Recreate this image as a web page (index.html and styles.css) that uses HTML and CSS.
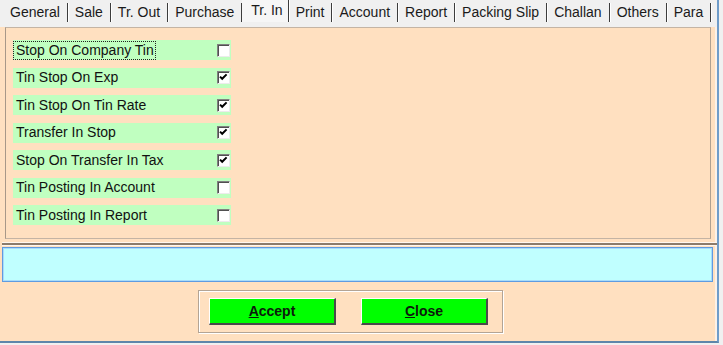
FILE: index.html
```html
<!DOCTYPE html>
<html>
<head>
<meta charset="utf-8">
<title>Settings</title>
<link rel="stylesheet" href="styles.css">
</head>
<body>
<div class="window">
  <div class="tabs">
    <div class="tab">General</div>
    <div class="tab">Sale</div>
    <div class="tab">Tr. Out</div>
    <div class="tab">Purchase</div>
    <div class="tab active">Tr. In</div>
    <div class="tab">Print</div>
    <div class="tab">Account</div>
    <div class="tab">Report</div>
    <div class="tab">Packing Slip</div>
    <div class="tab">Challan</div>
    <div class="tab">Others</div>
    <div class="tab">Para</div>
  </div>
  <div class="panel">
    <div class="row"><span class="label focus">Stop On Company Tin</span><span class="check"></span></div>
    <div class="row"><span class="label">Tin Stop On Exp</span><span class="check"><svg viewBox="0 0 11 11" width="11" height="11"><path d="M2 4.6 L4.2 6.8 L8.6 2.4" fill="none" stroke="#000" stroke-width="2"/></svg></span></div>
    <div class="row"><span class="label">Tin Stop On Tin Rate</span><span class="check"><svg viewBox="0 0 11 11" width="11" height="11"><path d="M2 4.6 L4.2 6.8 L8.6 2.4" fill="none" stroke="#000" stroke-width="2"/></svg></span></div>
    <div class="row"><span class="label">Transfer In Stop</span><span class="check"><svg viewBox="0 0 11 11" width="11" height="11"><path d="M2 4.6 L4.2 6.8 L8.6 2.4" fill="none" stroke="#000" stroke-width="2"/></svg></span></div>
    <div class="row"><span class="label">Stop On Transfer In Tax</span><span class="check"><svg viewBox="0 0 11 11" width="11" height="11"><path d="M2 4.6 L4.2 6.8 L8.6 2.4" fill="none" stroke="#000" stroke-width="2"/></svg></span></div>
    <div class="row"><span class="label">Tin Posting In Account</span><span class="check"></span></div>
    <div class="row"><span class="label">Tin Posting In Report</span><span class="check"></span></div>
  </div>
  <div class="divider"></div>
  <div class="status"></div>
  <div class="buttons">
    <button class="btn"><u>A</u>ccept</button>
    <button class="btn"><u>C</u>lose</button>
  </div>
</div>
</body>
</html>
```
FILE: styles.css
```css
html, body {
  margin: 0;
  padding: 0;
}
body {
  width: 723px;
  height: 345px;
  overflow: hidden;
  background: #f0f0f0;
  font-family: "Liberation Sans", Arial, sans-serif;
}
.window {
  width: 717px;
  height: 341px;
  background: #ffe0c0;
  border-right: 2px solid #6f9cc9;
  border-bottom: 2px solid #5e86aa;
  box-shadow: inset -2px 0 0 #fbf1e8;
  display: flex;
  flex-direction: column;
}
.tabs {
  display: flex;
  align-items: flex-start;
  height: 27px;
  box-sizing: border-box;
  padding-left: 3px;
  background: #f0f0f0;
}
.tab {
  margin-top: 3px;
  height: 19px;
  line-height: 19px;
  padding: 0 7px;
  font-size: 14px;
  color: #1a1a1a;
  border-right: 1px solid #3c3c3c;
  box-shadow: 1px 0 0 #ffffff;
}
.tab.active {
  margin-top: 0;
  height: 22px;
  line-height: 20px;
  padding: 0 5px 0 9px;
  background: #f6f6f6;
}
.panel {
  margin-left: 5px;
  width: 706px;
  height: 212px;
  box-sizing: border-box;
  border: 1px solid #c4b4a4;
  border-left-color: #a89888;
  border-right-color: #b0a090;
  padding: 12px 0 0 7px;
  display: flex;
  flex-direction: column;
  gap: 7.5px;
}
.row {
  width: 218px;
  height: 20px;
  flex: none;
  background: #c0ffc0;
  display: flex;
  align-items: center;
  justify-content: space-between;
}
.label {
  font-size: 14px;
  line-height: 17px;
  color: #111;
  padding-left: 3px;
}
.label.focus {
  margin-left: 1px;
  padding: 0 1px 0 2px;
  outline: 1px dotted #222;
}
.check {
  width: 13px;
  height: 13px;
  box-sizing: border-box;
  margin-right: 1px;
  background: #fff;
  border-top: 1px solid #808080;
  border-left: 1px solid #808080;
  border-right: 1px solid #ececec;
  border-bottom: 1px solid #ececec;
  box-shadow: inset 1px 1px 0 #505050;
  display: flex;
}
.check svg {
  display: block;
}
.divider {
  margin: 3px 0 0 2px;
  width: 715px;
  height: 2px;
  background: #8b7b6b;
  border-top: 1px solid #fff6ee;
  border-bottom: 1px solid #fff6ee;
}
.status {
  margin: 1px 0 0 2px;
  width: 711px;
  height: 35px;
  box-sizing: border-box;
  background: #c0ffff;
  border: 1px solid #5f9be0;
  box-shadow: inset 0 0 0 1px #a8dcfa;
}
.buttons {
  margin: 8px 0 0 198px;
  width: 305px;
  height: 43px;
  box-sizing: border-box;
  border: 1px solid #b4a494;
  box-shadow: inset 1px 1px 0 #ffffff, 1px 1px 0 #ffffff;
  padding: 7px 0 0 10px;
  display: flex;
  gap: 25px;
  align-items: flex-start;
}
.btn {
  width: 127px;
  height: 27px;
  box-sizing: border-box;
  padding: 0;
  background: #00ff00;
  border-top: 1px solid #ffffff;
  border-left: 1px solid #ffffff;
  border-right: 2px solid #4a4a4a;
  border-bottom: 2px solid #4a4a4a;
  font-family: "Liberation Sans", Arial, sans-serif;
  font-weight: bold;
  font-size: 14px;
  color: #0c1a0c;
}
```
